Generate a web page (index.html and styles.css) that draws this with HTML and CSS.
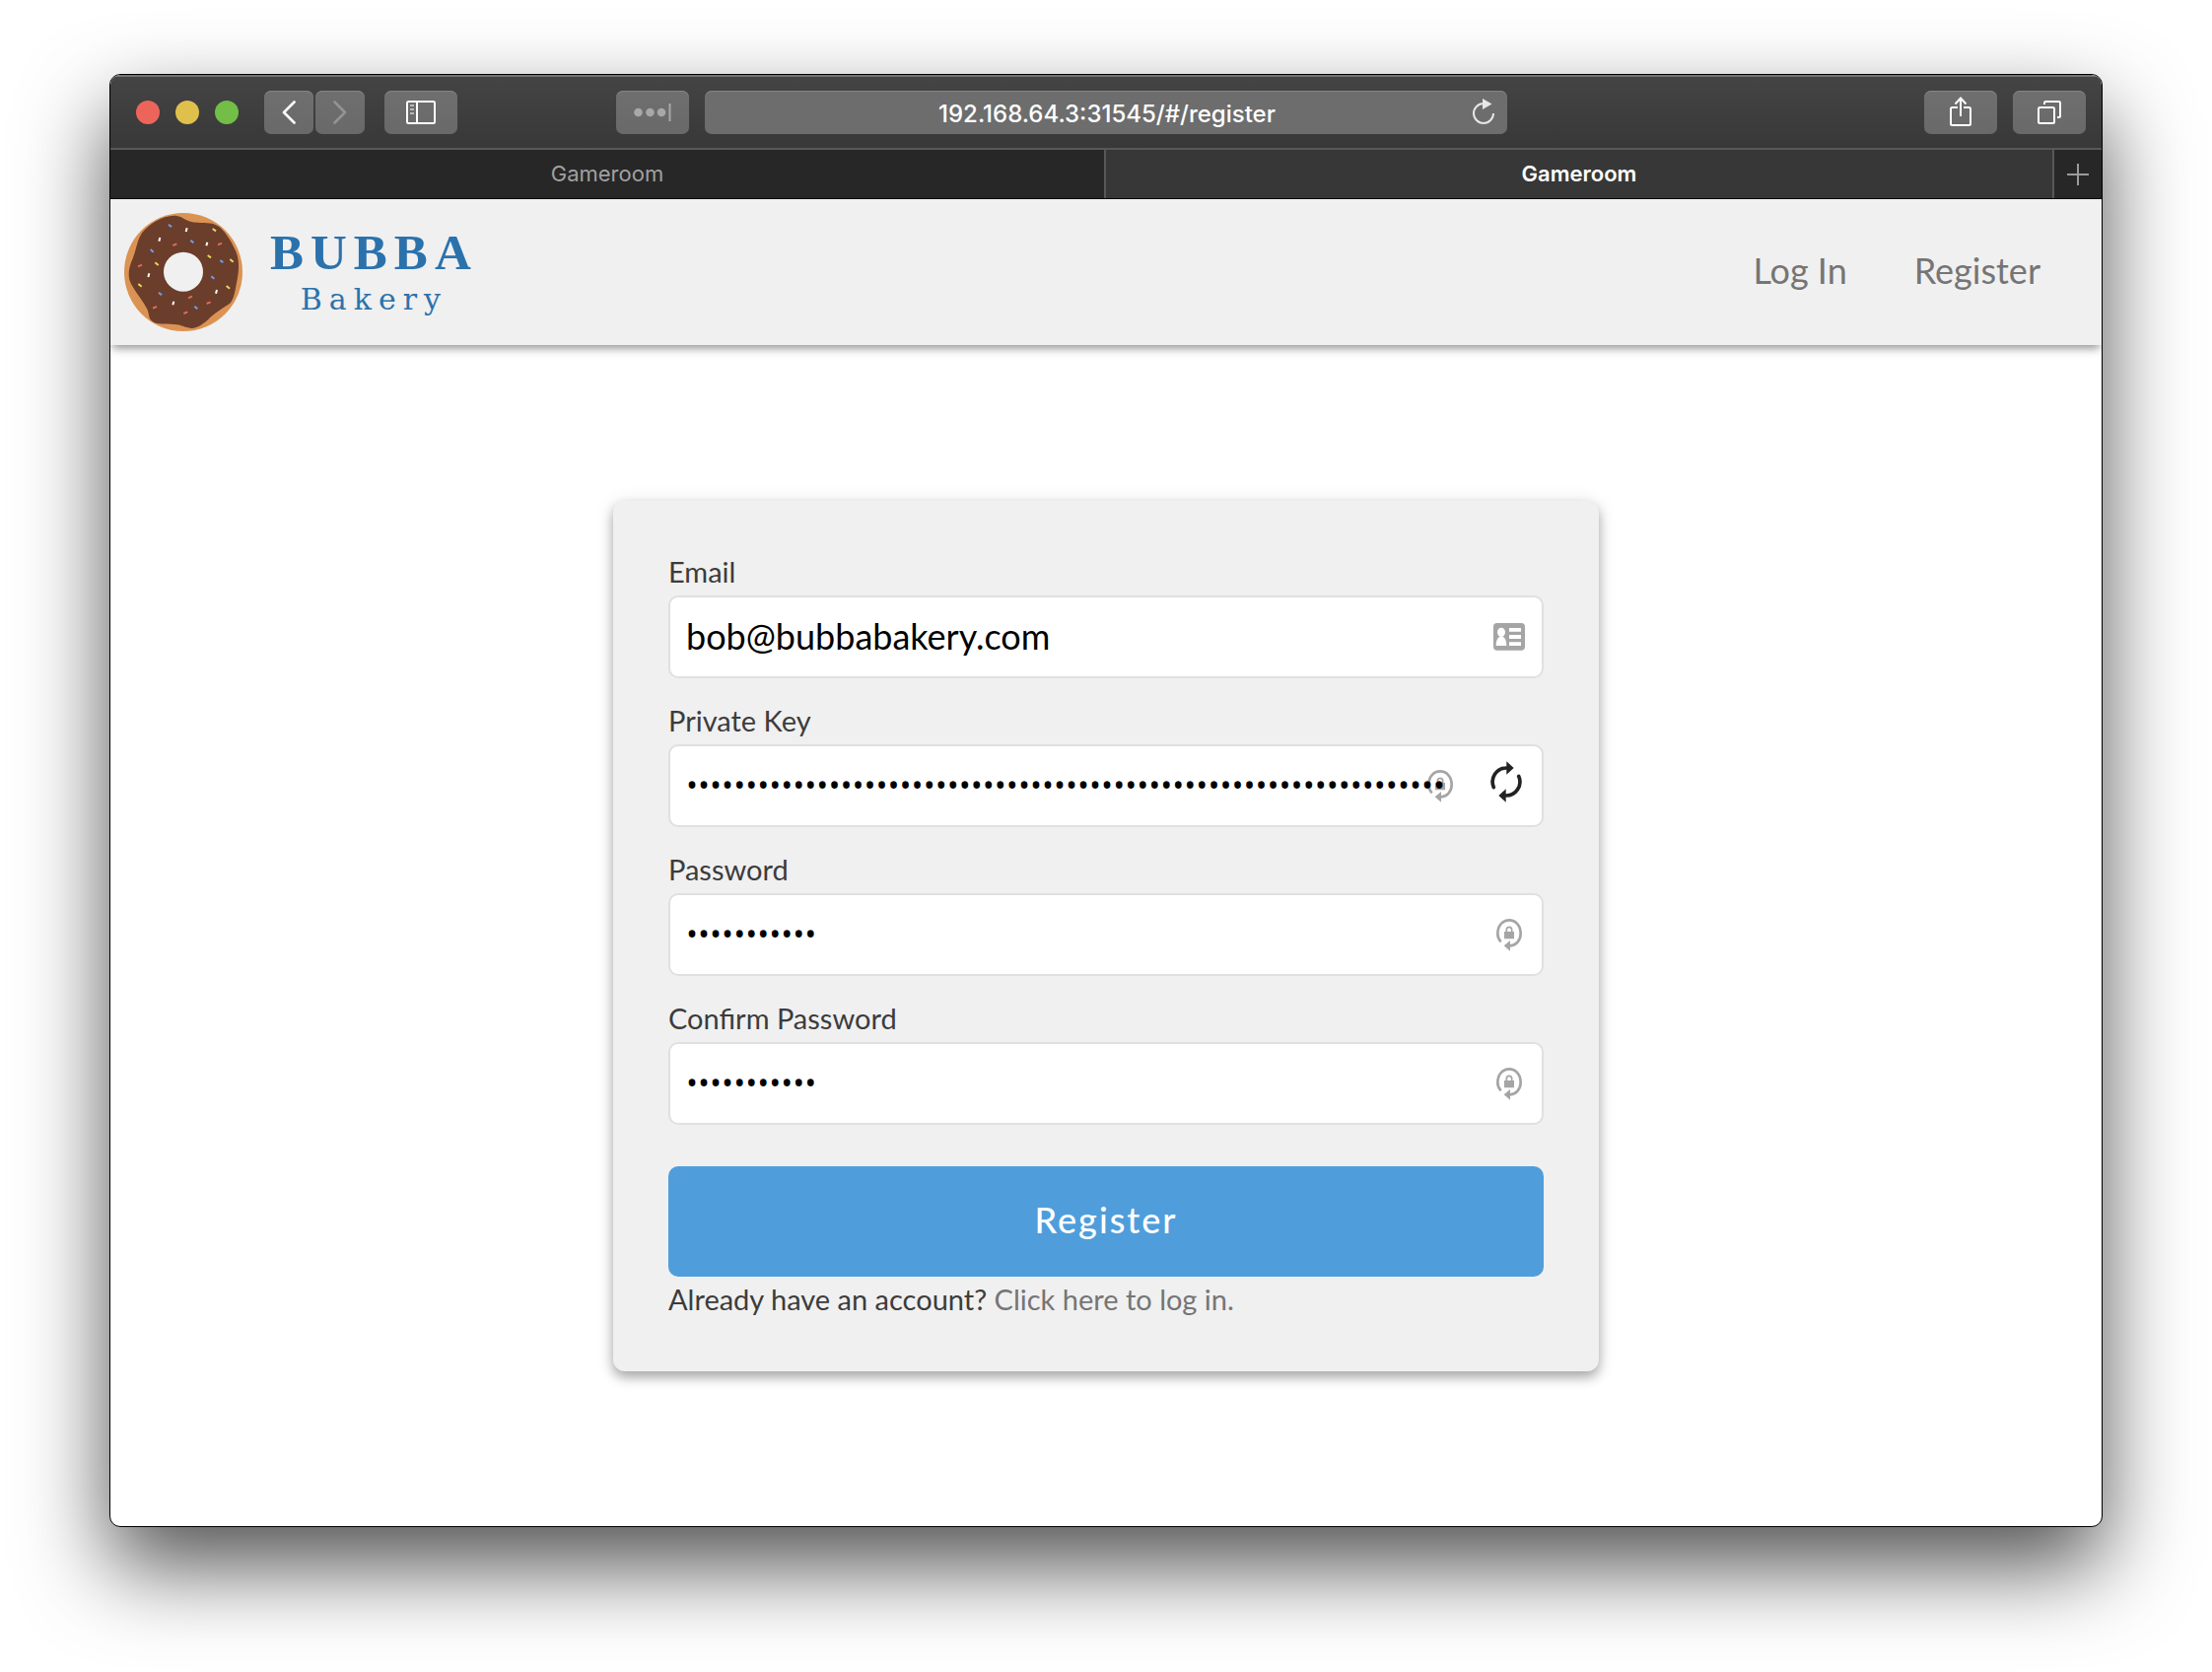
FILE: index.html
```html
<!DOCTYPE html>
<html lang="en">
<head>
<meta charset="utf-8">
<title>Gameroom</title>
<link rel="stylesheet" href="styles.css">
</head>
<body>
<div class="window">
  <div class="toolbar">
    <div class="toolbar-left">
      <div class="lights"><span class="light red"></span><span class="light yellow"></span><span class="light green"></span></div>
      <div class="history">
        <button class="tool narrow" type="button" aria-label="Back"><svg width="14" height="24" viewBox="0 0 14 24" fill="none" stroke="#fff" stroke-width="2.6" stroke-linecap="round" stroke-linejoin="round"><path d="M12.5 1.5 2 12l10.500 10.500"/></svg></button>
        <button class="tool narrow" type="button" aria-label="Forward"><svg width="14" height="24" viewBox="0 0 14 24" fill="none" stroke="#939393" stroke-width="2.6" stroke-linecap="round" stroke-linejoin="round"><path d="M1.500 1.500 12 12 1.500 22.500"/></svg></button>
      </div>
      <button class="tool" type="button" aria-label="Show sidebar"><svg width="30" height="24" viewBox="0 0 30 24" fill="none" stroke="#fff" stroke-width="2"><rect x="1" y="1" width="28" height="22" rx="1.500"/><path d="M11 1v22"/><path d="M4 5h4M4 9h4M4 13h4" stroke="#b9b9b9"/></svg></button>
      <button class="tool extension" type="button" aria-label="Password manager"><svg width="38" height="20" viewBox="0 0 38 20" fill="#a8a8a8"><circle cx="4.500" cy="10" r="4.300"/><circle cx="16.500" cy="10" r="4.300"/><circle cx="28" cy="10" r="4.300"/><path d="M35.500 1h2v18h-2z"/></svg></button>
    </div>
    <div class="address">
      <input class="url" type="text" value="192.168.64.3:31545/#/register" aria-label="Address">
      <button class="reload" type="button" aria-label="Reload"><svg width="22" height="26" viewBox="0 0 22 26"><path d="M21 15A10 10 0 1 1 11 5" fill="none" stroke="#e6e6e6" stroke-width="2"/><path d="M10 0l9.500 5.500L10 11z" fill="#e6e6e6"/></svg></button>
    </div>
    <div class="toolbar-right">
      <button class="tool" type="button" aria-label="Share"><svg class="share" width="22" height="30" viewBox="0 0 22 30" fill="none" stroke="#fff" stroke-width="2"><path d="M8 11H2.500Q1 11 1 12.500v15Q1 29 2.500 29h17q1.500 0 1.500-1.500v-15Q21 11 19.500 11H14"/><path d="M11 20V2M5.500 7.500 11 1.500l5.500 6"/></svg></button>
      <button class="tool" type="button" aria-label="Show tabs"><svg width="24" height="24" viewBox="0 0 24 24" fill="none" stroke="#fff" stroke-width="2"><rect x="1" y="7" width="16" height="16" rx="1.500"/><path d="M7 4V2.500Q7 1 8.500 1h13Q23 1 23 2.500v13q0 1.500-1.500 1.500H20"/></svg></button>
    </div>
  </div>
  <div class="tabs">
    <button class="tab" type="button">Gameroom</button>
    <button class="tab active" type="button">Gameroom</button>
    <button class="new-tab" type="button" aria-label="New tab"><svg width="22" height="22" viewBox="0 0 22 22" stroke="#9b9b9b" stroke-width="2"><path d="M0 11h22M11 0v22"/></svg></button>
  </div>
  <header class="site-header">
    <a class="brand" href="#/">
      <svg class="donut" width="120" height="120" viewBox="48 48 360 360" aria-hidden="true">
        <circle cx="228" cy="228" r="180" fill="#da9353"/>
        <path fill="#6b3d2b" d="M205 56C232 60 234 76 272 77C300 79 318 75 340 92C362 112 378 142 389 168C398 192 398 218 392 250C386 280 384 308 370 323C354 334 332 346 312 364C292 384 274 399 252 399C232 396 222 388 200 387C176 385 146 390 131 376C121 366 125 354 117 339C104 314 80 286 68 262C56 235 64 210 74 187C86 155 88 128 103 107C124 82 165 54 205 56Z"/>
        <circle cx="228" cy="227" r="60" fill="#f0f0f0"/>
        <g stroke-width="6">
          <path stroke="#6d9eeb" d="M183 83l9 8M250 131l9 8M128 159l9 8M340 192l9 7M313 241l9 7M153 290l9 8M262 332l9 8"/>
          <path stroke="#fff" d="M239 94l-3 11M157 123l-3 11M301 137l-3 11M124 232l-3 11M330 282l-3 11M199 317l-3 11"/>
          <path stroke="#e06b5b" d="M196 147l12-5M333 145l12-5M90 211l12-5M243 307l12-5M299 324l12-5M135 338l12-5M229 354l12-5"/>
          <path stroke="#e6d85c" d="M317 96l10 7M302 177l10 7M370 189l10 8M142 199l10 8M91 264l10 8M359 270l10 8"/>
        </g>
      </svg>
      <span class="wordmark"><span class="brand-name">BUBBA</span><span class="brand-sub">Bakery</span></span>
    </a>
    <nav class="nav"><a href="#/login">Log In</a><a href="#/register">Register</a></nav>
  </header>
  <main class="page">
    <form class="card">
      <div class="field">
        <label for="email">Email</label>
        <div class="box">
          <input id="email" type="email" value="bob@bubbabakery.com">
          <svg class="icon contact" width="32" height="28" viewBox="0 0 96 84"><rect width="96" height="83" rx="11" fill="#a5a5a5"/><g fill="#fff"><ellipse cx="24" cy="28" rx="12" ry="14"/><path d="M8 69c0-16 5-25 11-27h10c6 2 11 11 11 27zM48 15h36v11H48zM48 36h36v12H48zM48 58h36v11H48z"/></g></svg>
        </div>
      </div>
      <div class="field">
        <label for="key">Private Key</label>
        <div class="box with-action">
          <svg class="icon lock" width="26" height="33" viewBox="0 0 78 99"><use href="#lock-cycle"/></svg>
          <input id="key" type="password" value="4f3edf983ac636a65a842ce7c78d9aa706d3b113bce9c46f30d7d21715b23b1d">
          <button class="generate" type="button" aria-label="Generate private key"><svg width="32" height="42" viewBox="0 0 96 124"><g id="half" fill="#222"><path d="M10 79A42 42 0 0 1 49 20" fill="none" stroke="#222" stroke-width="11" stroke-linecap="round"/><path d="M49 0l22 20-22 20z"/></g><use href="#half" transform="rotate(180 48 62)"/></svg></button>
        </div>
      </div>
      <div class="field">
        <label for="password">Password</label>
        <div class="box">
          <input id="password" type="password" value="bubbabakery">
          <svg class="icon lock" width="26" height="33" viewBox="0 0 78 99"><g id="lock-cycle"><path d="M14 70C6 62 4 54 4 45C4 20 20 4 39 4S74 20 74 45C74 66 60 80 42 82" fill="none" stroke="#a5a5a5" stroke-width="8"/><path d="M42 66v32L23 82zM24 39h30v22H24z" fill="#a5a5a5"/><path d="M31 40v-7a8 8 0 0 1 16 0v7" fill="none" stroke="#a5a5a5" stroke-width="5"/></g></svg>
        </div>
      </div>
      <div class="field">
        <label for="confirm">Confirm Password</label>
        <div class="box">
          <input id="confirm" type="password" value="bubbabakery">
          <svg class="icon lock" width="26" height="33" viewBox="0 0 78 99"><use href="#lock-cycle"/></svg>
        </div>
      </div>
      <button class="submit" type="submit">Register</button>
      <p class="hint">Already have an account? <a href="#/login">Click here to log in.</a></p>
    </form>
  </main>
</div>
</body>
</html>
```
FILE: styles.css
```css
* { box-sizing: border-box; }

body {
  margin: 0;
  min-height: 100vh;
  padding: 75px 111px 147px;
  display: flex;
  background: #fff;
  font-family: Lato, "Open Sans", sans-serif;
}

button, input { font: inherit; margin: 0; }
button { border: 0; padding: 0; cursor: pointer; }
a { color: inherit; text-decoration: none; }
svg { display: block; }

.window {
  flex: 1;
  min-width: 0;
  display: flex;
  flex-direction: column;
  overflow: hidden;
  border: 1px solid #000;
  border-radius: 11px;
  background: #fff;
  box-shadow: 0 40px 88px rgba(0, 0, 0, .68);
}

/* Browser chrome */
.toolbar {
  height: 76px;
  display: grid;
  grid-template-columns: 1fr minmax(0, 814px) 1fr;
  align-items: center;
  background: linear-gradient(#444, #383838);
  border-top: 2px solid #737373;
  border-bottom: 2px solid #585858;
  font-family: Inter, sans-serif;
}

.toolbar-left { display: flex; align-items: center; padding: 0 16px 0 26px; }
.lights { display: flex; gap: 16px; margin-right: 26px; }
.light { width: 24px; height: 24px; border-radius: 50%; }
.red { background: #ed655a; }
.yellow { background: #e0c04c; }
.green { background: #72be47; }
.history { display: flex; gap: 2px; margin-right: 20px; }

.tool {
  width: 74px;
  height: 44px;
  display: grid;
  place-items: center;
  border-radius: 7px;
  background: linear-gradient(#6f6f6f, #696969);
  box-shadow: inset 0 1px #858585;
}
.tool.narrow { width: 50px; }
.extension { margin-left: auto; }
.share { margin-bottom: 2px; }

.address {
  height: 44px;
  display: flex;
  align-items: center;
  position: relative;
  border-radius: 7px;
  background: #6d6d6d;
  box-shadow: inset 0 1px #858585;
}
.url {
  width: 100%;
  height: 44px;
  padding: 2px 0 0 2px;
  border: 0;
  background: none;
  color: #fff;
  font-size: 24px;
  font-weight: 500;
  text-align: center;
}
.reload { position: absolute; right: 13px; top: 8px; background: none; }
.toolbar-right { display: flex; justify-content: flex-end; gap: 16px; padding-right: 16px; }

.tabs {
  height: 50px;
  display: flex;
  border-bottom: 1px solid #000;
  background: #272727;
  font-family: Inter, sans-serif;
}
.tab { flex: 1010 1 0; padding-bottom: 2px; background: none; color: #a0a0a0; font-size: 22px; }
.tab.active {
  flex: 962 1 0;
  border-left: 2px solid #585858;
  border-right: 2px solid #585858;
  background: #373737;
  color: #fff;
  font-weight: 600;
}
.new-tab { flex: 0 0 48px; display: grid; place-items: center; background: none; }

/* Site header */
.site-header {
  height: 148px;
  display: flex;
  align-items: center;
  justify-content: space-between;
  padding: 0 62px 0 14px;
  background: #f0f0f0;
  box-shadow: 0 5px 9px -2px rgba(0, 0, 0, .45);
}
.brand { display: flex; align-items: center; gap: 28px; color: #2b72ad; }
.wordmark { display: flex; flex-direction: column; align-items: center; padding-top: 4px; }
.brand-name {
  font: bold 51px/52px "Liberation Serif", serif;
  letter-spacing: 7px;
}
.brand-sub {
  font: 30px/44px "DejaVu Serif", serif;
  letter-spacing: 7px;
}
.nav { display: flex; gap: 68px; padding-bottom: 4px; color: #757575; font-size: 36px; }

/* Registration form */
.page { flex: 1; display: flex; align-items: center; justify-content: center; }
.card {
  width: 1000px;
  max-width: 100%;
  padding: 56px 56px 50px;
  border-radius: 12px;
  background: #f0f0f0;
  box-shadow: 0 6px 12px rgba(0, 0, 0, .3), 0 2px 20px rgba(0, 0, 0, .1);
  color: #3c3c3c;
  font-size: 29px;
}
.field { margin-bottom: 27px; }
.field label { display: block; line-height: 32px; padding-bottom: 8px; }
.box {
  height: 84px;
  display: flex;
  position: relative;
  border: 2px solid #e0e0e0;
  border-radius: 10px;
  background: #fff;
}
.box input {
  flex: 1;
  min-width: 0;
  padding: 0 16px 2px;
  border: 0;
  background: none;
  position: relative;
  color: #000;
  font-size: 36px;
}
.box input[type="password"] { font-family: "Open Sans", sans-serif; font-size: 32px; }
.icon { position: absolute; right: 20px; top: 24px; }
.contact { right: 17px; top: 26px; }
.with-action .lock { right: 90px; }
.generate { width: 68px; padding: 0 0 8px 16px; display: flex; align-items: center; background: none; }

.submit {
  width: 100%;
  height: 112px;
  display: block;
  margin-top: 42px;
  padding-bottom: 4px;
  border-radius: 10px;
  background: #4f9edb;
  color: #fff;
  font-size: 36px;
  font-weight: 500;
  letter-spacing: 2px;
}
.hint { margin: 0; line-height: 46px; }
.hint a { color: #757575; }
```
